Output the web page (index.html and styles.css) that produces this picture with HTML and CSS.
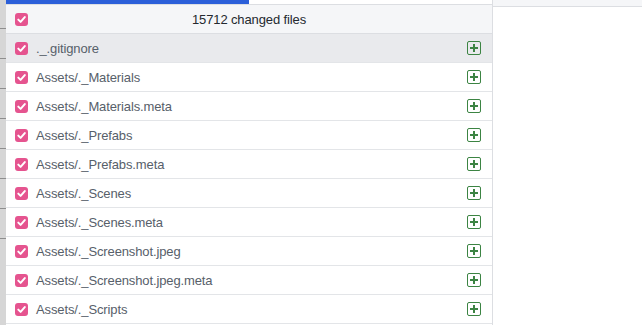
FILE: index.html
```html
<!DOCTYPE html>
<html lang="en">
<head>
  <meta charset="UTF-8" />
  <title>Changes</title>
  <link rel="stylesheet" href="styles.css">
</head>
<body>
  <!-- sliver of the window behind -->
  <div class="edge">
    <div class="edge-line"></div>
    <div class="edge-line"></div>
    <div class="edge-line"></div>
    <div class="edge-line"></div>
    <div class="edge-line"></div>
    <div class="edge-line"></div>
    <div class="edge-line"></div>
    <div class="edge-line"></div>
  </div>

  <!-- Changes list -->
  <div class="panel">
    <div class="progress"><div class="progress-fill"></div></div>
    <div class="list-header">
      <span class="check"><svg viewBox="0 0 13 13"><path d="M3.3 6.6 L5.6 8.9 L9.8 4.1"/></svg></span>
      <span class="header-title">15712 changed files</span>
    </div>
    <div class="file selected"><span class="check"><svg viewBox="0 0 13 13"><path d="M3.3 6.6 L5.6 8.9 L9.8 4.1"/></svg></span><span class="path">._.gitignore</span><span class="added"></span></div>
    <div class="file"><span class="check"><svg viewBox="0 0 13 13"><path d="M3.3 6.6 L5.6 8.9 L9.8 4.1"/></svg></span><span class="path">Assets/._Materials</span><span class="added"></span></div>
    <div class="file"><span class="check"><svg viewBox="0 0 13 13"><path d="M3.3 6.6 L5.6 8.9 L9.8 4.1"/></svg></span><span class="path">Assets/._Materials.meta</span><span class="added"></span></div>
    <div class="file"><span class="check"><svg viewBox="0 0 13 13"><path d="M3.3 6.6 L5.6 8.9 L9.8 4.1"/></svg></span><span class="path">Assets/._Prefabs</span><span class="added"></span></div>
    <div class="file"><span class="check"><svg viewBox="0 0 13 13"><path d="M3.3 6.6 L5.6 8.9 L9.8 4.1"/></svg></span><span class="path">Assets/._Prefabs.meta</span><span class="added"></span></div>
    <div class="file"><span class="check"><svg viewBox="0 0 13 13"><path d="M3.3 6.6 L5.6 8.9 L9.8 4.1"/></svg></span><span class="path">Assets/._Scenes</span><span class="added"></span></div>
    <div class="file"><span class="check"><svg viewBox="0 0 13 13"><path d="M3.3 6.6 L5.6 8.9 L9.8 4.1"/></svg></span><span class="path">Assets/._Scenes.meta</span><span class="added"></span></div>
    <div class="file"><span class="check"><svg viewBox="0 0 13 13"><path d="M3.3 6.6 L5.6 8.9 L9.8 4.1"/></svg></span><span class="path">Assets/._Screenshot.jpeg</span><span class="added"></span></div>
    <div class="file"><span class="check"><svg viewBox="0 0 13 13"><path d="M3.3 6.6 L5.6 8.9 L9.8 4.1"/></svg></span><span class="path">Assets/._Screenshot.jpeg.meta</span><span class="added"></span></div>
    <div class="file"><span class="check"><svg viewBox="0 0 13 13"><path d="M3.3 6.6 L5.6 8.9 L9.8 4.1"/></svg></span><span class="path">Assets/._Scripts</span><span class="added"></span></div>
  </div>

  <!-- Diff area -->
  <div class="diff">
    <div class="diff-bar"></div>
  </div>
</body>
</html>
```

FILE: styles.css
```css
* {
  margin: 0;
  padding: 0;
  box-sizing: border-box;
}

body {
  display: flex;
  height: 325px;
  overflow: hidden;
  background: #fff;
  font-family: "Liberation Sans", Arial, sans-serif;
  font-size: 13px;
  letter-spacing: -0.12px;
}

/* Window behind */
.edge {
  width: 6px;
  background: #d6d6d6;
  display: flex;
  flex-direction: column;
  padding-top: 28px;
  gap: 29px;
}

.edge-line {
  height: 1px;
  background: #8e8e8e;
}

/* Changes list */
.panel {
  width: 487px;
  border-right: 1px solid #dcdee2;
  display: flex;
  flex-direction: column;
}

.progress {
  height: 5px;
  border-bottom: 1px solid #dcdee2;
}

.progress-fill {
  width: 243px;
  height: 4px;
  background: #2b5fd9;
}

.list-header {
  height: 29px;
  display: flex;
  align-items: center;
  padding-left: 9px;
  background: #f5f6f8;
  border-bottom: 1px solid #dcdee2;
}

.header-title {
  flex: 1;
  text-align: center;
  color: #24292f;
  padding-right: 22px;
}

.check {
  width: 13px;
  height: 13px;
  border-radius: 3px;
  background: #e5548f;
  flex-shrink: 0;
  display: flex;
}

.check svg {
  width: 13px;
  height: 13px;
  fill: none;
  stroke: #fff;
  stroke-width: 2;
  stroke-linecap: round;
  stroke-linejoin: round;
}

.file {
  height: 29px;
  display: flex;
  align-items: center;
  padding: 0 11px 0 9px;
  border-bottom: 1px solid #e3e5e8;
}

.file.selected {
  background: #e9eaed;
}

.path {
  flex: 1;
  margin-left: 8px;
  color: #57606a;
}

.added {
  width: 14px;
  height: 14px;
  border: 1.5px solid #3c8443;
  border-radius: 2px;
  position: relative;
}

.added::before,
.added::after {
  content: "";
  position: absolute;
  background: #3c8443;
}

.added::before {
  left: 1.5px;
  top: 4.5px;
  width: 8px;
  height: 2px;
}

.added::after {
  left: 4.5px;
  top: 1.5px;
  width: 2px;
  height: 8px;
}

/* Diff area */
.diff {
  flex: 1;
}

.diff-bar {
  height: 7px;
  background: #f5f6f8;
  border-bottom: 1px solid #dcdee2;
}
```
